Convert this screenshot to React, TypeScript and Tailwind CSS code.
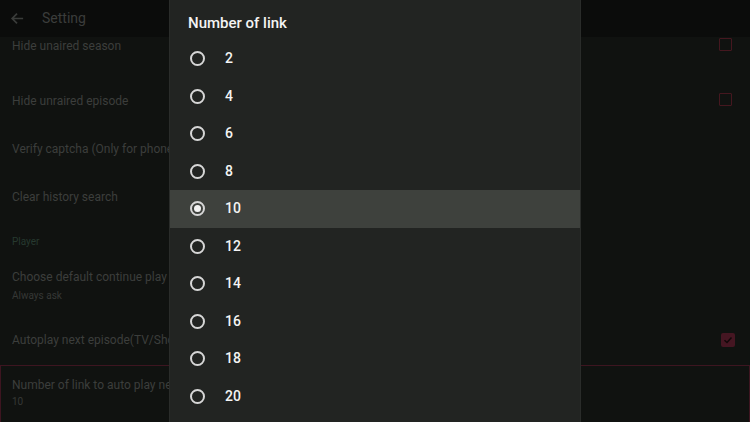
import React from "react";

const CheckBox = ({ checked = false }: { checked?: boolean }) =>
  checked ? (
    <div className="w-[14px] h-[14px] rounded-[2px] bg-[#451622] flex items-center justify-center">
      <svg width="10" height="10" viewBox="0 0 10 10">
        <path d="M1.5 5.2 L4 7.5 L8.5 2.5" stroke="#120809" strokeWidth="1.5" fill="none" />
      </svg>
    </div>
  ) : (
    <div className="w-[13px] h-[13px] rounded-[1px] border-[1.5px] border-[#45171f]" />
  );

const Radio = ({ checked }: { checked: boolean }) => (
  <div className="w-[15px] h-[15px] rounded-full border-2 border-[#d6d6d6] flex items-center justify-center">
    {checked && <div className="w-[7px] h-[7px] rounded-full bg-[#f2f2f2]" />}
  </div>
);

export default function App() {
  const options = [2, 4, 6, 8, 10, 12, 14, 16, 18, 20];
  return (
    <div
      className="relative w-[750px] h-[422px] overflow-hidden bg-[#101210]"
      style={{ fontFamily: "Roboto, 'Noto Sans', sans-serif" }}
    >
      {/* Settings background */}
      <div className="flex flex-col">
        <div className="h-[37px] bg-[#0b0c0b] flex items-center">
          <svg className="ml-[10px]" width="15" height="15" viewBox="0 0 16 16">
            <path d="M14 8 H2.5 M7.5 2.8 L2.3 8 L7.5 13.2" stroke="#3a3c3a" strokeWidth="1.8" fill="none" />
          </svg>
          <span className="ml-[17px] text-[14px] text-[#3b3d3b]">Setting</span>
        </div>
        <div className="h-[55px] flex items-start justify-between pl-[12px] pr-[18px] pt-[1px]">
          <span className="text-[12px] leading-[16px] text-[#3c3e3c]">Hide unaired season</span>
          <div><CheckBox /></div>
        </div>
        <div className="h-[44px] flex items-start justify-between pl-[12px] pr-[18px] pt-[1px]">
          <span className="text-[12px] leading-[16px] text-[#3c3e3c]">Hide unraired episode</span>
          <div><CheckBox /></div>
        </div>
        <div className="h-[48px] pl-[12px]">
          <span className="text-[12px] leading-[16px] text-[#3c3e3c]">Verify captcha (Only for phone</span>
        </div>
        <div className="h-[44px] pl-[12px]">
          <span className="text-[12px] leading-[16px] text-[#3c3e3c]">Clear history search</span>
        </div>
        <div className="h-[41px] pl-[12px]">
          <span className="text-[10px] leading-[16px] text-[#26392f]">Player</span>
        </div>
        <div className="h-[63px] pl-[12px] flex flex-col">
          <span className="text-[12px] leading-[16px] text-[#3c3e3c]">Choose default continue play</span>
          <span className="mt-[4px] text-[10px] leading-[14px] text-[#363836]">Always ask</span>
        </div>
        <div className="h-[33px] flex items-start justify-between pl-[12px] pr-[15px]">
          <span className="text-[12px] leading-[16px] text-[#3c3e3c]">Autoplay next episode(TV/Show)</span>
          <div className="mt-[1px]"><CheckBox checked /></div>
        </div>
        <div className="h-[58px] border border-[#3d1520] pl-[11px] pt-[11px] flex flex-col">
          <span className="text-[12px] leading-[16px] text-[#3c3e3c]">Number of link to auto play next</span>
          <span className="mt-[2px] text-[10px] leading-[14px] text-[#363836]">10</span>
        </div>
      </div>

      {/* Dialog */}
      <div className="absolute top-0 left-[169px] w-[412px] h-[422px] bg-[#222422] border-x border-[#2a2c2a] flex flex-col">
        <div className="h-[40px] pl-[18px] flex items-center">
          <span className="text-[15px] font-medium text-[#f4f4f4] mt-[7px]">Number of link</span>
        </div>
        {options.map((n) => (
          <div
            key={n}
            className={`h-[37.5px] flex items-center pl-[20px] ${n === 10 ? "bg-[#3e413d]" : ""}`}
          >
            <Radio checked={n === 10} />
            <span className="ml-[20px] text-[14px] font-medium text-[#f4f4f4]">{n}</span>
          </div>
        ))}
      </div>
    </div>
  );
}
